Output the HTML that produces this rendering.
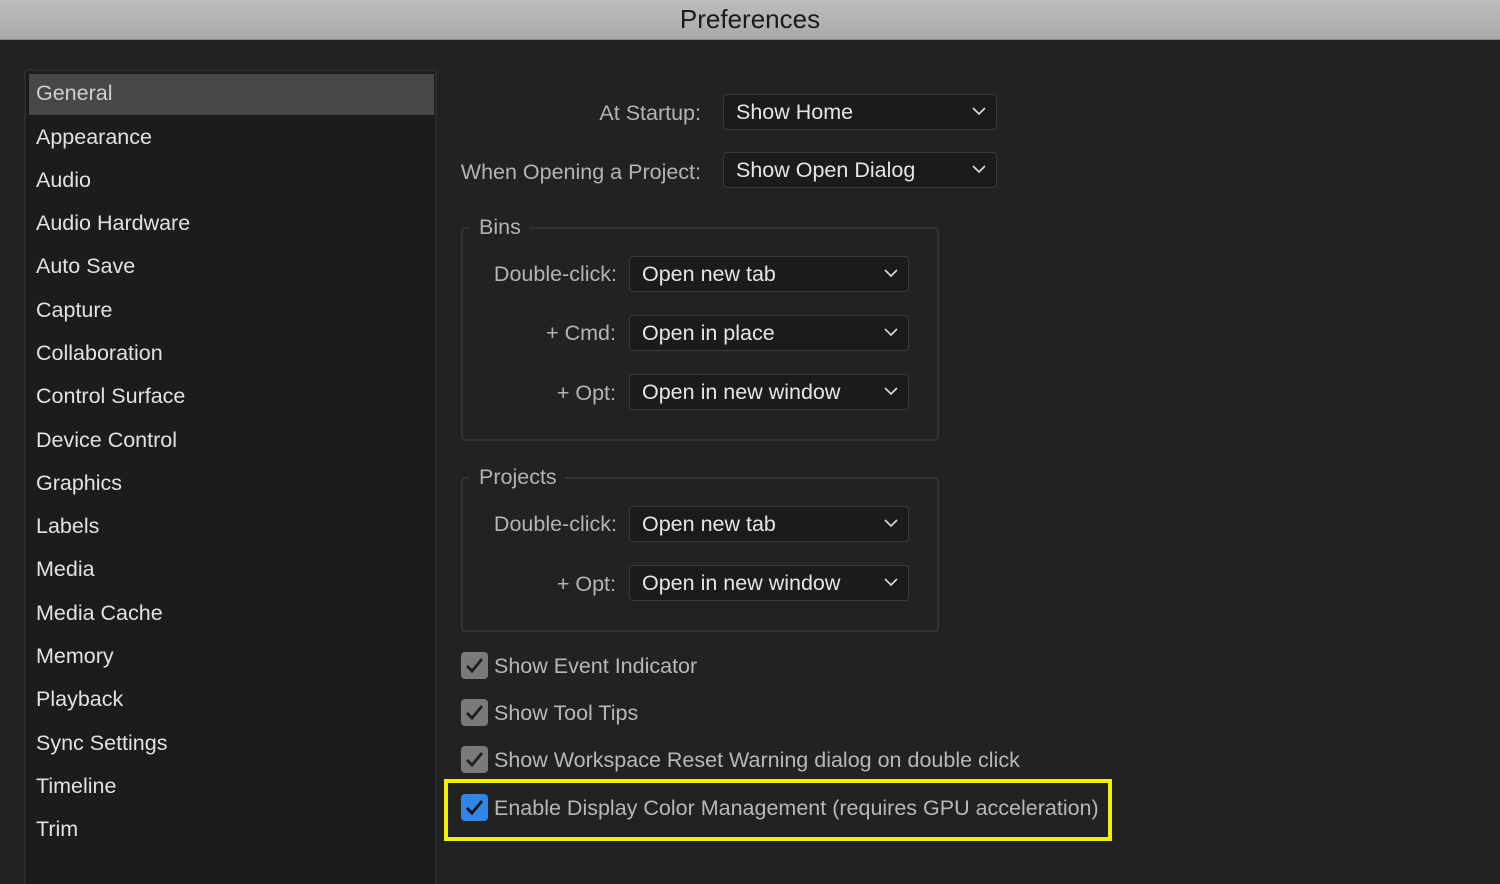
<!DOCTYPE html>
<html><head><meta charset="utf-8"><style>
*{margin:0;padding:0;box-sizing:border-box}
html,body{width:1500px;height:884px;overflow:hidden}
body{background:#222;font-family:"Liberation Sans",sans-serif;position:relative;color:#dcdcdc}
.title{position:absolute;left:0;top:0;width:1500px;height:40px;background:linear-gradient(#bdbdbd,#a9a9a9);border-bottom:1px solid #8a8a8a;text-align:center;font-size:26px;line-height:38px;color:#1a1a1a}
.side{position:absolute;left:24px;top:69px;width:413px;height:815px;background:#1c1c1c;border:2px solid #2c2c2c;border-bottom:none;border-radius:3px 3px 0 0}
.item{position:absolute;left:11px;font-size:21.5px;color:#e2e2e2;line-height:24px}
.sel{position:absolute;left:3px;top:3px;width:405px;height:41px;background:#474747}
.lbl{position:absolute;font-size:21.5px;color:#b4b4b4;text-align:right;line-height:24px}
.dd{position:absolute;height:36px;background:#1b1b1b;border:1px solid #3a3a3a;border-radius:4px;font-size:21.5px;color:#e6e6e6;line-height:35px;padding-left:12px}
.dd svg{position:absolute;right:10px;top:12px}
.grp{position:absolute;border:2px solid #333;border-radius:4px}
.leg{position:absolute;background:#222;padding:0 8px 0 10px;font-size:21.5px;color:#b4b4b4;line-height:24px}
.cb{position:absolute;left:461px;width:27px;height:27px;background:#7a7a7a;border-radius:4px}
.cb svg{position:absolute;left:4px;top:5px}
.ct{position:absolute;left:494px;font-size:21.5px;color:#b8b8b8;line-height:24px}
</style></head><body>
<div class="title">Preferences</div>
<div class="side"><div class="sel"></div></div>
<div class="item" style="left:36px;top:81px;color:#cfcfcf">General</div>
<div class="item" style="left:36px;top:125px">Appearance</div>
<div class="item" style="left:36px;top:168px">Audio</div>
<div class="item" style="left:36px;top:211px">Audio Hardware</div>
<div class="item" style="left:36px;top:254px">Auto Save</div>
<div class="item" style="left:36px;top:298px">Capture</div>
<div class="item" style="left:36px;top:341px">Collaboration</div>
<div class="item" style="left:36px;top:384px">Control Surface</div>
<div class="item" style="left:36px;top:428px">Device Control</div>
<div class="item" style="left:36px;top:471px">Graphics</div>
<div class="item" style="left:36px;top:514px">Labels</div>
<div class="item" style="left:36px;top:557px">Media</div>
<div class="item" style="left:36px;top:601px">Media Cache</div>
<div class="item" style="left:36px;top:644px">Memory</div>
<div class="item" style="left:36px;top:687px">Playback</div>
<div class="item" style="left:36px;top:731px">Sync Settings</div>
<div class="item" style="left:36px;top:774px">Timeline</div>
<div class="item" style="left:36px;top:817px">Trim</div>

<div class="lbl" style="right:799px;top:101px">At Startup:</div>
<div class="dd" style="left:723px;top:94px;width:274px">Show Home<svg width="14" height="9"><path d="M1 1l6 6 6-6" stroke="#ddd" stroke-width="1.6" fill="none"/></svg></div>
<div class="lbl" style="right:799px;top:160px">When Opening a Project:</div>
<div class="dd" style="left:723px;top:152px;width:274px">Show Open Dialog<svg width="14" height="9"><path d="M1 1l6 6 6-6" stroke="#ddd" stroke-width="1.6" fill="none"/></svg></div>

<div class="grp" style="left:461px;top:227px;width:478px;height:214px"></div>
<div class="leg" style="left:469px;top:215px">Bins</div>
<div class="lbl" style="right:883px;top:262px">Double-click:</div>
<div class="dd" style="left:629px;top:256px;width:280px">Open new tab<svg width="14" height="9"><path d="M1 1l6 6 6-6" stroke="#ddd" stroke-width="1.6" fill="none"/></svg></div>
<div class="lbl" style="right:884px;top:321px">+ Cmd:</div>
<div class="dd" style="left:629px;top:315px;width:280px">Open in place<svg width="14" height="9"><path d="M1 1l6 6 6-6" stroke="#ddd" stroke-width="1.6" fill="none"/></svg></div>
<div class="lbl" style="right:884px;top:381px">+ Opt:</div>
<div class="dd" style="left:629px;top:374px;width:280px">Open in new window<svg width="14" height="9"><path d="M1 1l6 6 6-6" stroke="#ddd" stroke-width="1.6" fill="none"/></svg></div>

<div class="grp" style="left:461px;top:477px;width:478px;height:155px"></div>
<div class="leg" style="left:469px;top:465px">Projects</div>
<div class="lbl" style="right:883px;top:512px">Double-click:</div>
<div class="dd" style="left:629px;top:506px;width:280px">Open new tab<svg width="14" height="9"><path d="M1 1l6 6 6-6" stroke="#ddd" stroke-width="1.6" fill="none"/></svg></div>
<div class="lbl" style="right:884px;top:572px">+ Opt:</div>
<div class="dd" style="left:629px;top:565px;width:280px">Open in new window<svg width="14" height="9"><path d="M1 1l6 6 6-6" stroke="#ddd" stroke-width="1.6" fill="none"/></svg></div>

<div class="cb" style="top:652px"><svg width="19" height="17"><path d="M2 9l5 5 10-12" stroke="#1e1e1e" stroke-width="2.8" fill="none"/></svg></div>
<div class="ct" style="top:654px">Show Event Indicator</div>
<div class="cb" style="top:699px"><svg width="19" height="17"><path d="M2 9l5 5 10-12" stroke="#1e1e1e" stroke-width="2.8" fill="none"/></svg></div>
<div class="ct" style="top:701px">Show Tool Tips</div>
<div class="cb" style="top:746px"><svg width="19" height="17"><path d="M2 9l5 5 10-12" stroke="#1e1e1e" stroke-width="2.8" fill="none"/></svg></div>
<div class="ct" style="top:748px">Show Workspace Reset Warning dialog on double click</div>
<div style="position:absolute;left:444px;top:779px;width:668px;height:62px;border:4px solid #f2f200"></div>
<div class="cb" style="top:794px;background:#2f86e6"><svg width="19" height="17"><path d="M2 9l5 5 10-12" stroke="#111" stroke-width="2.8" fill="none"/></svg></div>
<div class="ct" style="top:796px">Enable Display Color Management (requires GPU acceleration)</div>
</body></html>
